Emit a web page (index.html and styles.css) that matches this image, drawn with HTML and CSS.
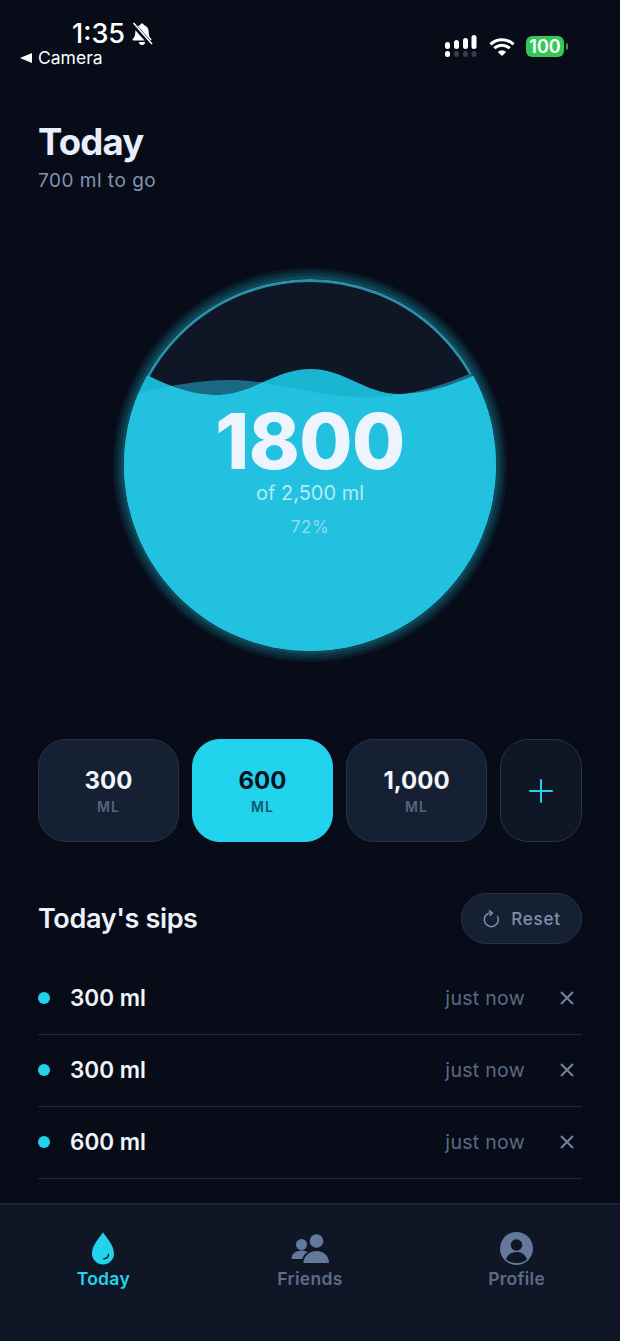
FILE: index.html
```html
<!DOCTYPE html>
<html lang="en">
<head>
<meta charset="utf-8">
<title>Today</title>
<link rel="stylesheet" href="styles.css">
</head>
<body>
<div class="app">
  <div class="status">
    <div class="status-left">
      <div class="time-row">
        <span class="time">1:35</span>
        <svg class="bell" viewBox="0 0 22 24" width="22" height="24"><path d="M11 1.500c1 0 1.700.7 1.800 1.600 3.200.8 4.900 3.400 4.900 6.900 0 3.400.9 5.300 2.600 7 .5.600.1 1.500-.7 1.500H2.400c-.8 0-1.200-.9-.7-1.500 1.700-1.700 2.600-3.600 2.600-7 0-3.500 1.700-6.100 4.900-6.900.1-.9.800-1.600 1.800-1.600zM8 20h6a3 3 0 0 1-6 0z" fill="#fff"/><path d="M1.500 1.500 20.500 23" stroke="#080c18" stroke-width="4.500"/><path d="M2.500 1 21 22" stroke="#fff" stroke-width="1.600"/></svg>
      </div>
      <div class="back"><span class="back-arrow"></span>Camera</div>
    </div>
    <div class="status-right">
      <svg class="signal" viewBox="0 0 32 22" width="32" height="22">
        <g fill="#fff"><rect x="0" y="7" width="5" height="7" rx="2.500"/><rect x="9" y="5" width="5" height="9" rx="2.500"/><rect x="18" y="3" width="5" height="11" rx="2.500"/><rect x="26.500" y="0" width="5" height="14" rx="2.500"/><rect x="0" y="16" width="5" height="6" rx="2.500"/></g>
        <g fill="#3a3d47"><rect x="9" y="16" width="5" height="6" rx="2.500"/><rect x="18" y="16" width="5" height="6" rx="2.500"/><rect x="26.500" y="16" width="5" height="6" rx="2.500"/></g>
      </svg>
      <svg class="wifi" viewBox="0 0 26 19" width="26" height="19"><path d="M1.500 7.300a16.500 16.500 0 0 1 23 0M5.300 11.300a11 11 0 0 1 15.400 0" fill="none" stroke="#fff" stroke-width="3"/><path d="M13 19 8.800 15a6 6 0 0 1 8.400 0z" fill="#fff"/></svg>
      <div class="battery"><span class="battery-body">100</span><span class="battery-cap"></span></div>
    </div>
  </div>

  <header class="head">
    <h1 class="title">Today</h1>
    <p class="subtitle">700 ml to go</p>
  </header>

  <section class="gauge-wrap">
    <div class="gauge">
      <svg class="water" viewBox="0 0 372 372">
        <defs>
          <clipPath id="wave-b-clip"><path d="M0 84C30 100 60 116 91 116C130 116 150 90 186 90C222 90 240 115 276 115C310 115 345 100 372 86V372H0Z"/></clipPath>
        </defs>
        <circle class="ring" cx="186" cy="186" r="184.500"/>
        <path class="wave-back" d="M0 118C20 114 60 101 106 101C150 101 190 118 240 118C290 118 320 106 372 84V372H0Z"/>
        <path class="wave-mid" d="M0 84C30 100 60 116 91 116C130 116 150 90 186 90C222 90 240 115 276 115C310 115 345 100 372 86V372H0Z"/>
        <path class="wave-front" clip-path="url(#wave-b-clip)" d="M0 118C20 114 60 101 106 101C150 101 190 118 240 118C290 118 320 106 372 84V372H0Z"/>
      </svg>
      <div class="reading">
        <div class="amount">1800</div>
        <div class="goal">of 2,500 ml</div>
        <div class="percent">72%</div>
      </div>
    </div>
  </section>

  <section class="quick">
    <button class="chip"><span class="chip-num">300</span><span class="chip-unit">ML</span></button>
    <button class="chip active"><span class="chip-num">600</span><span class="chip-unit">ML</span></button>
    <button class="chip"><span class="chip-num">1,000</span><span class="chip-unit">ML</span></button>
    <button class="chip-add"><svg viewBox="0 0 24 24" width="24" height="24"><path d="M12 1v22M1 12h22" stroke="#22d3ee" stroke-width="2" stroke-linecap="round"/></svg></button>
  </section>

  <section class="sips">
    <div class="sips-head">
      <h2 class="sips-title">Today's sips</h2>
      <button class="reset">
        <svg viewBox="0 0 18 18" width="18" height="18"><path d="M6.200 3.200A7 7 0 1 0 14 4.500" fill="none" stroke="#7f8fab" stroke-width="1.500" stroke-linecap="round" transform="rotate(20 9 10)"/><path d="M7.500 .8 10.500 3 8 5.500" fill="none" stroke="#7f8fab" stroke-width="1.500" stroke-linecap="round" stroke-linejoin="round"/></svg>
        <span>Reset</span>
      </button>
    </div>
    <ul class="list">
      <li class="row"><span class="dot"></span><span class="row-ml">300 ml</span><span class="row-time">just now</span><svg class="x" viewBox="0 0 14 14" width="14" height="14"><path d="M1 1l12 12M13 1 1 13" stroke="#73839e" stroke-width="2"/></svg></li>
      <li class="row"><span class="dot"></span><span class="row-ml">300 ml</span><span class="row-time">just now</span><svg class="x" viewBox="0 0 14 14" width="14" height="14"><path d="M1 1l12 12M13 1 1 13" stroke="#73839e" stroke-width="2"/></svg></li>
      <li class="row"><span class="dot"></span><span class="row-ml">600 ml</span><span class="row-time">just now</span><svg class="x" viewBox="0 0 14 14" width="14" height="14"><path d="M1 1l12 12M13 1 1 13" stroke="#73839e" stroke-width="2"/></svg></li>
    </ul>
  </section>

  <nav class="tabs">
    <a class="tab current">
      <svg viewBox="0 0 24 33" width="24" height="33"><path d="M12 .5C15 5 23 13 23 21.500a11 11 0 0 1-22 0C1 13 9 5 12 .5z" fill="#22d3ee"/><path d="M17.500 22.500c-.3 2.500-2 4-4.500 4.300" fill="none" stroke="#0f1726" stroke-width="1.500" stroke-linecap="round"/></svg>
      <span>Today</span>
    </a>
    <a class="tab">
      <svg viewBox="0 0 38 33" width="38" height="33"><g fill="#64789b"><circle cx="10.500" cy="12.500" r="5.500"/><circle cx="25.500" cy="9" r="6.800"/><path d="M.5 27c0-5 4-8.500 10-8.500 2.500 0 4.500.6 6 1.600-2.800 1.700-4.300 4-5 6.900H.5z"/><path d="M12.500 31c0-7 5.500-12 13-12s12.500 5 12.500 12H12.500z"/></g></svg>
      <span>Friends</span>
    </a>
    <a class="tab">
      <svg viewBox="0 0 33 33" width="33" height="33"><circle cx="16.500" cy="16.500" r="16.500" fill="#64789b"/><circle cx="16.500" cy="13" r="5.800" fill="#0f1726"/><path d="M6 27.500c1.500-5 5.500-7.500 10.500-7.500s9 2.500 10.500 7.500a15 15 0 0 1-10.500 3.500A15 15 0 0 1 6 27.500z" fill="#0f1726"/></svg>
      <span>Profile</span>
    </a>
  </nav>
</div>
</body>
</html>
```

FILE: styles.css
```css
* { box-sizing: border-box; }
html, body { margin: 0; padding: 0; }
body { background: #080c18; font-family: Inter, "Liberation Sans", sans-serif; color: #f1f5f9; }
.app { width: 620px; height: 1341px; display: flex; flex-direction: column; overflow: hidden; background: #080c18; }

.status { height: 74px; padding: 20px 52px 0 20px; display: flex; justify-content: space-between; align-items: flex-start; }
.status-left { display: flex; flex-direction: column; }
.time-row { display: flex; align-items: center; gap: 6px; padding-left: 52px; height: 28px; }
.time { font-size: 27px; font-weight: 500; color: #fff; line-height: 28px; }
.back { display: flex; align-items: center; gap: 6px; font-size: 17.5px; line-height: 20px; color: #fff; height: 20px; }
.back-arrow { width: 0; height: 0; border-style: solid; border-width: 5.5px 12px 5.5px 0; border-color: transparent #fff transparent transparent; }
.status-right { display: flex; align-items: center; gap: 11px; padding-top: 15px; }
.signal { margin-right: 1px; }
.battery { display: flex; align-items: center; }
.battery-body { width: 38px; height: 21px; background: #34c759; border-radius: 6px; color: #fff; font-size: 18px; font-weight: 600; line-height: 21px; text-align: center; }
.battery-cap { width: 2px; height: 7px; background: #2c9c49; border-radius: 0 2px 2px 0; margin-left: 2px; }

.head { padding: 46px 38px 0; }
.title { margin: 0; font-size: 36.5px; line-height: 44px; font-weight: 700; letter-spacing: -.8px; color: #e8eefb; }
.subtitle { margin: 4px 0 0; font-size: 19px; line-height: 26px; color: #8193b0; letter-spacing: .5px; }

.gauge-wrap { display: flex; justify-content: center; padding-top: 85px; }
.gauge { position: relative; width: 372px; height: 372px; border-radius: 50%; background: #0f1726; box-shadow: 0 0 0 3px #0f4859, 0 0 0 6px #0d3645, 0 0 0 8.5px #0a2735, 0 0 0 11px #09192a; }
.water { position: absolute; inset: 0; width: 100%; height: 100%; display: block; border-radius: 50%; overflow: hidden; }
.ring { fill: none; stroke: #2a90a8; stroke-width: 3px; }
.wave-back { fill: #1a6a84; }
.wave-mid { fill: #1ab5d0; }
.wave-front { fill: #22c1df; }
.reading { position: absolute; inset: 0; display: flex; flex-direction: column; align-items: center; padding-top: 127px; }
.amount { font-size: 77px; line-height: 70px; font-weight: 800; color: #eef4fd; letter-spacing: -.6px; }
.goal { font-size: 20px; line-height: 26px; color: #b3ecf8; margin-top: 4px; }
.percent { font-size: 17px; line-height: 20px; color: #8edcee; margin-top: 11px; letter-spacing: .5px; }

.quick { display: flex; gap: 13px; padding: 88px 38px 0; }
.chip { flex: 1 1 0; height: 103px; border-radius: 28px; border: 1px solid #27334a; background: #162033; display: flex; flex-direction: column; align-items: center; justify-content: center; font-family: inherit; padding: 1px 0 0; }
.chip.active { background: #22d3ee; border-color: #22d3ee; }
.chip-num { font-size: 24px; line-height: 28px; font-weight: 700; color: #f1f5f9; }
.chip-unit { font-size: 14px; line-height: 18px; font-weight: 600; color: #54647f; letter-spacing: 1px; margin-top: 3px; }
.active .chip-num { color: #07111c; }
.active .chip-unit { color: #10566a; }
.chip-add { flex: 0 0 82px; height: 103px; border-radius: 28px; border: 1px solid #27334a; background: #0f1726; display: flex; align-items: center; justify-content: center; padding: 0; }

.sips { padding: 51px 38px 0; }
.sips-head { display: flex; justify-content: space-between; align-items: center; height: 51px; }
.sips-title { margin: 0; padding-top: 1px; font-size: 27px; line-height: 32px; font-weight: 600; color: #edf2fb; letter-spacing: -.35px; }
.reset { width: 121px; height: 51px; border-radius: 26px; border: 1px solid #27334a; background: #162033; display: flex; align-items: center; justify-content: center; gap: 11px; font-family: inherit; font-size: 17px; font-weight: 500; color: #7f8fab; letter-spacing: .8px; padding: 0; }
.list { list-style: none; margin: 19px 0 0; padding: 0; }
.row { height: 72px; display: flex; align-items: center; border-bottom: 1px solid #212a3d; padding: 0 8px 2px 0; }
.dot { width: 12px; height: 12px; border-radius: 50%; background: #22d3ee; margin-right: 20px; }
.row-ml { font-size: 22.5px; font-weight: 600; color: #f1f5f9; flex: 1; }
.row-time { font-size: 19.5px; color: #5a6a86; margin-right: 35px; letter-spacing: .3px; }

.tabs { margin-top: auto; height: 138px; background: #0f1726; border-top: 2px solid #1c2538; display: flex; justify-content: space-around; padding: 27px 0 0; }
.tab { width: 206px; display: flex; flex-direction: column; align-items: center; height: 60px; justify-content: flex-start; gap: 3px; color: #5b6c88; font-size: 17.5px; font-weight: 600; letter-spacing: .3px; }
.tab.current { color: #22d3ee; }
```
